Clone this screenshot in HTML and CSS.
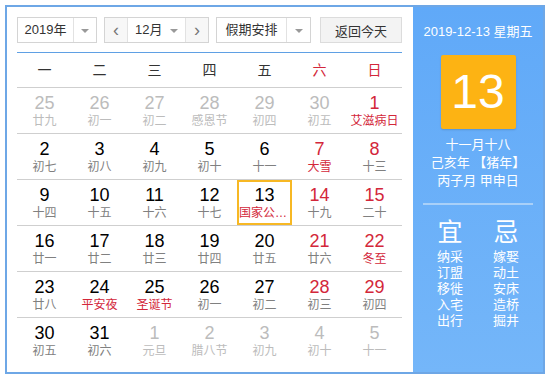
FILE: index.html
```html
<!DOCTYPE html>
<html lang="zh-CN">
<head>
    <meta charset="UTF-8">
    <title>万年历</title>
    <link rel="stylesheet" href="styles.css">
</head>
<body>
    <div class="calendar">
        <div class="main">
            <div class="toolbar">
                <div class="select year">
                    <span class="value">2019年</span>
                    <span class="arrow"><i class="caret"></i></span>
                </div>
                <div class="select month">
                    <span class="nav">&lsaquo;</span>
                    <span class="value">12月 <i class="caret"></i></span>
                    <span class="nav">&rsaquo;</span>
                </div>
                <div class="select holiday">
                    <span class="value">假期安排</span>
                    <span class="arrow"><i class="caret"></i></span>
                </div>
                <button class="today-btn">返回今天</button>
            </div>

            <div class="weekdays">
                <span>一</span><span>二</span><span>三</span><span>四</span><span>五</span>
                <span class="weekend">六</span><span class="weekend">日</span>
            </div>

            <div class="week">
                <div class="day other"><b>25</b><em>廿九</em></div>
                <div class="day other"><b>26</b><em>初一</em></div>
                <div class="day other"><b>27</b><em>初二</em></div>
                <div class="day other"><b>28</b><em>感恩节</em></div>
                <div class="day other"><b>29</b><em>初四</em></div>
                <div class="day other"><b>30</b><em>初五</em></div>
                <div class="day weekend"><b>1</b><em class="fest">艾滋病日</em></div>
            </div>
            <div class="week">
                <div class="day"><b>2</b><em>初七</em></div>
                <div class="day"><b>3</b><em>初八</em></div>
                <div class="day"><b>4</b><em>初九</em></div>
                <div class="day"><b>5</b><em>初十</em></div>
                <div class="day"><b>6</b><em>十一</em></div>
                <div class="day weekend"><b>7</b><em class="fest">大雪</em></div>
                <div class="day weekend"><b>8</b><em>十三</em></div>
            </div>
            <div class="week">
                <div class="day"><b>9</b><em>十四</em></div>
                <div class="day"><b>10</b><em>十五</em></div>
                <div class="day"><b>11</b><em>十六</em></div>
                <div class="day"><b>12</b><em>十七</em></div>
                <div class="day today"><b>13</b><em class="fest">国家公祭日</em></div>
                <div class="day weekend"><b>14</b><em>十九</em></div>
                <div class="day weekend"><b>15</b><em>二十</em></div>
            </div>
            <div class="week">
                <div class="day"><b>16</b><em>廿一</em></div>
                <div class="day"><b>17</b><em>廿二</em></div>
                <div class="day"><b>18</b><em>廿三</em></div>
                <div class="day"><b>19</b><em>廿四</em></div>
                <div class="day"><b>20</b><em>廿五</em></div>
                <div class="day weekend"><b>21</b><em>廿六</em></div>
                <div class="day weekend"><b>22</b><em class="fest">冬至</em></div>
            </div>
            <div class="week">
                <div class="day"><b>23</b><em>廿八</em></div>
                <div class="day"><b>24</b><em class="fest">平安夜</em></div>
                <div class="day"><b>25</b><em class="fest">圣诞节</em></div>
                <div class="day"><b>26</b><em>初一</em></div>
                <div class="day"><b>27</b><em>初二</em></div>
                <div class="day weekend"><b>28</b><em>初三</em></div>
                <div class="day weekend"><b>29</b><em>初四</em></div>
            </div>
            <div class="week last">
                <div class="day"><b>30</b><em>初五</em></div>
                <div class="day"><b>31</b><em>初六</em></div>
                <div class="day other"><b>1</b><em>元旦</em></div>
                <div class="day other"><b>2</b><em>腊八节</em></div>
                <div class="day other"><b>3</b><em>初九</em></div>
                <div class="day other"><b>4</b><em>初十</em></div>
                <div class="day other"><b>5</b><em>十一</em></div>
            </div>
        </div>

        <div class="side">
            <div class="side-date">2019-12-13 星期五</div>
            <div class="big-day">13</div>
            <div class="lunar">
                <p>十一月十八</p>
                <p>己亥年 【猪年】</p>
                <p>丙子月 甲申日</p>
            </div>
            <div class="almanac">
                <div class="col">
                    <h4>宜</h4>
                    <p>纳采</p><p>订盟</p><p>移徙</p><p>入宅</p><p>出行</p>
                </div>
                <div class="col">
                    <h4>忌</h4>
                    <p>嫁娶</p><p>动土</p><p>安床</p><p>造桥</p><p>掘井</p>
                </div>
            </div>
        </div>
    </div>
</body>
</html>
```

FILE: styles.css
```css
/* Global */
body {
    margin: 0;
    padding: 5px;
    font-family: "Liberation Sans", "Noto Sans CJK SC", sans-serif;
    background: #fff;
}

.calendar {
    display: flex;
    width: 536px;
    height: 365px;
    border: 2px solid #6ea7e6;
}

/* Left: month grid */
.main {
    width: 385px;
    padding: 10px 11px 0 10px;
}

.toolbar {
    display: flex;
    height: 26px;
    padding-bottom: 9px;
    border-bottom: 1px solid #5fa0e4;
}

.select {
    display: flex;
    height: 24px;
    border: 1px solid #d4d4d4;
    font-size: 13px;
    color: #333;
    line-height: 24px;
}

.select .value {
    text-align: center;
}

.select .arrow {
    border-left: 1px solid #e2e2e2;
    text-align: center;
}

.caret {
    display: inline-block;
    width: 0;
    height: 0;
    border-left: 4px solid transparent;
    border-right: 4px solid transparent;
    border-top: 4px solid #999;
    vertical-align: middle;
    margin-left: 4px;
}

.arrow .caret {
    margin-left: 0;
}

.year {
    width: 78px;
}

.year .value {
    width: 55px;
}

.year .arrow {
    width: 22px;
}

.month {
    width: 103px;
    margin-left: 7px;
}

.month .nav {
    width: 22px;
    text-align: center;
    font-size: 18px;
    color: #777;
    background: #f7f7f7;
}

.month .nav:first-child {
    border-right: 1px solid #e2e2e2;
}

.month .nav:last-child {
    border-left: 1px solid #e2e2e2;
}

.month .value {
    width: 57px;
}

.holiday {
    width: 93px;
    margin-left: 7px;
}

.holiday .value {
    width: 69px;
}

.holiday .arrow {
    width: 23px;
}

.today-btn {
    width: 82px;
    height: 26px;
    margin-left: 9px;
    border: 1px solid #dcdcdc;
    background: #f3f3f3;
    font-family: inherit;
    font-size: 13px;
    color: #333;
    padding: 0;
}

.weekdays {
    display: grid;
    grid-template-columns: repeat(7, 55px);
    height: 34px;
    line-height: 34px;
    border-bottom: 1px solid #cfcfcf;
    text-align: center;
    font-size: 14px;
    color: #333;
}

.weekdays .weekend {
    color: #d3273a;
}

.week {
    display: grid;
    grid-template-columns: repeat(7, 55px);
    height: 45px;
    border-bottom: 1px solid #cfcfcf;
}

.week.last {
    border-bottom: none;
}

.day {
    text-align: center;
    padding-top: 5px;
    box-sizing: border-box;
}

.day b {
    display: block;
    font-weight: normal;
    font-size: 18px;
    line-height: 20px;
    color: #000;
}

.day em {
    display: block;
    font-style: normal;
    font-size: 12px;
    line-height: 16px;
    color: #808080;
    white-space: nowrap;
    overflow: hidden;
    text-overflow: ellipsis;
}

.day.weekend b {
    color: #d3273a;
}

.day em.fest {
    color: #d3273a;
}

.day.other b,
.day.other em {
    color: #bcbcbc;
}

.day.today {
    border: 2px solid #f7b824;
    padding-top: 3px;
}

/* Right: today panel */
.side {
    flex: 1;
    background: linear-gradient(#60a9f8, #74b6f9);
    color: #fff;
    text-align: center;
}

.side-date {
    margin-top: 16px;
    font-size: 13px;
    line-height: 18px;
}

.big-day {
    width: 75px;
    height: 74px;
    margin: 14px auto 0;
    background: #fdb313;
    border-radius: 2px;
    box-shadow: 0 1px 2px rgba(0, 0, 0, 0.15);
    font-size: 48px;
    line-height: 74px;
}

.lunar {
    margin-top: 7px;
    font-size: 13px;
}

.lunar p {
    margin: 0;
    line-height: 18px;
}

.almanac {
    display: flex;
    justify-content: center;
    gap: 18px;
    margin: 13px 10px 0;
    padding-top: 12px;
    border-top: 2px solid #a9d0f8;
}

.almanac .col {
    width: 38px;
}

.almanac h4 {
    margin: 0 0 2px;
    font-size: 25px;
    font-weight: normal;
    line-height: 30px;
}

.almanac p {
    margin: 0;
    font-size: 13px;
    line-height: 16px;
}
```
